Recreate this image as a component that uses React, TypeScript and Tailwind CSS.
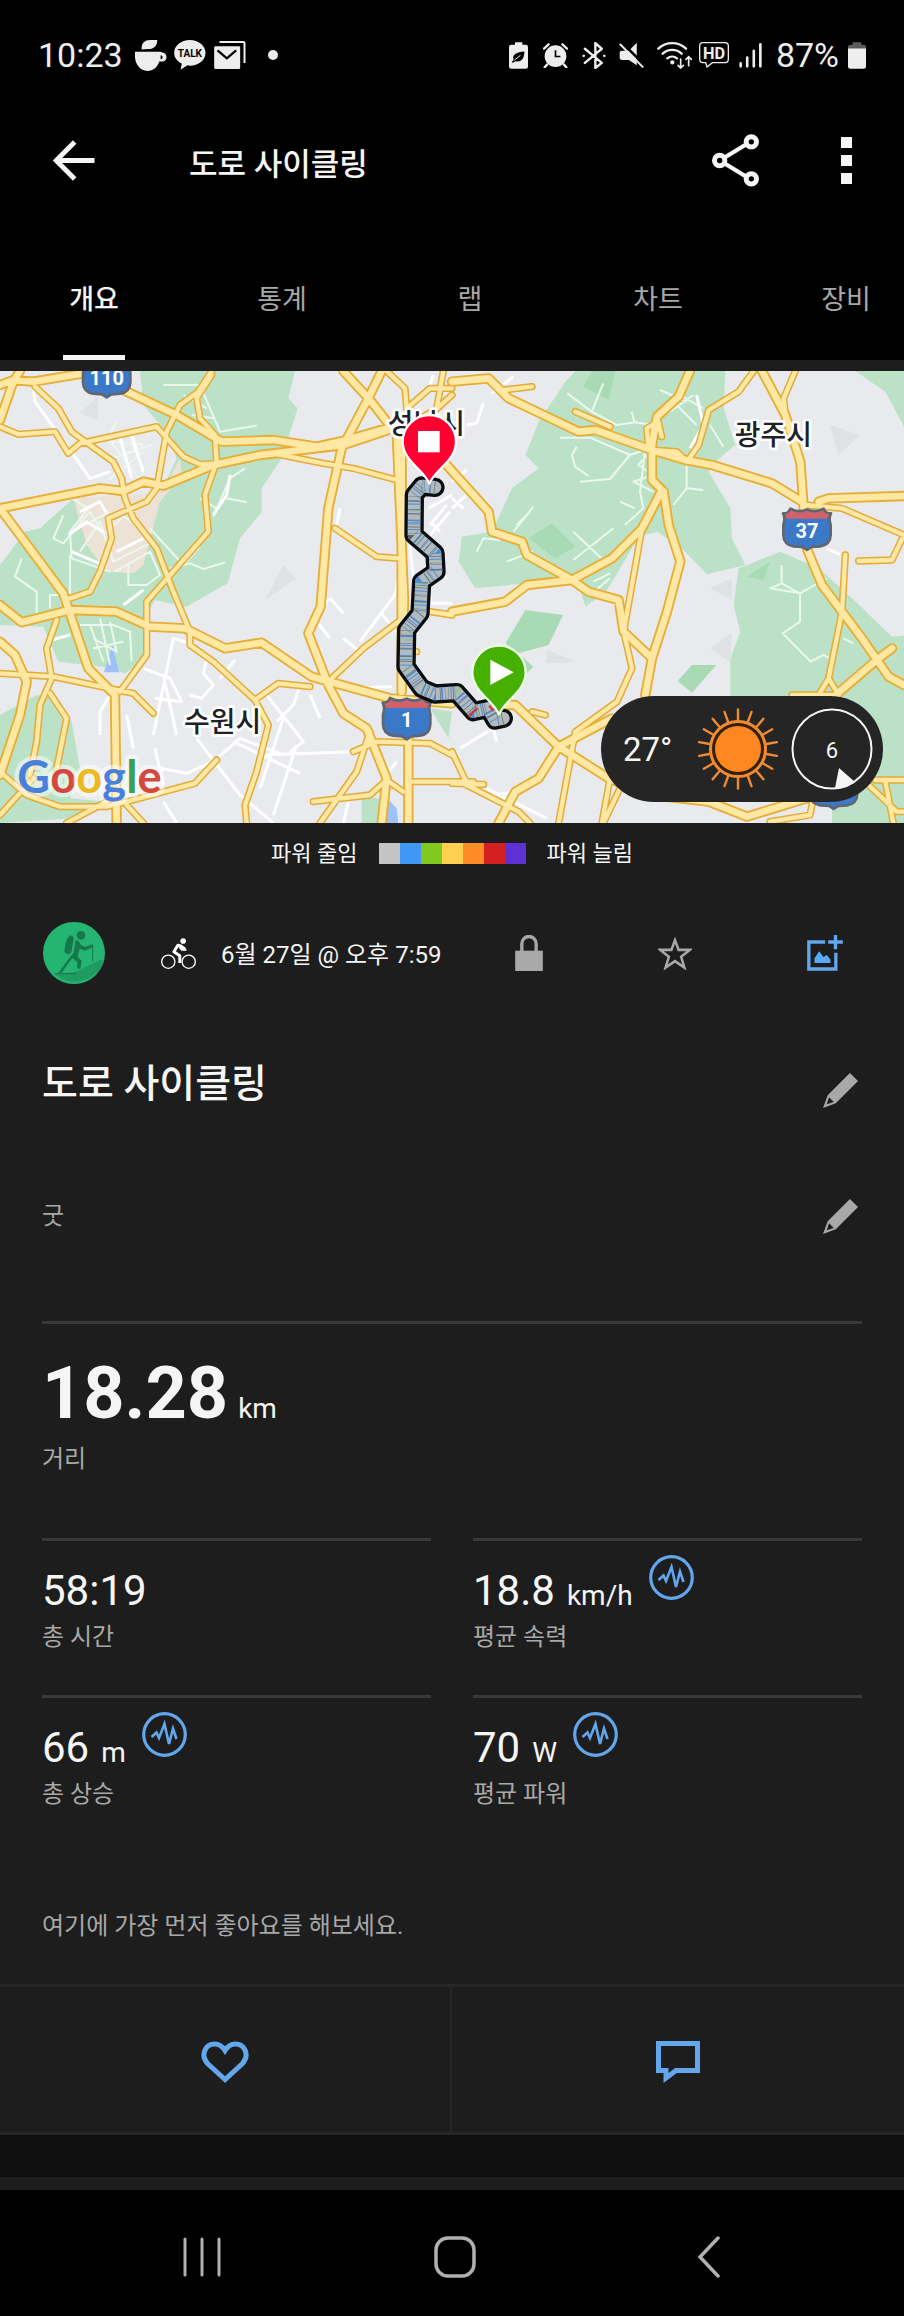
import React from 'react';

const TABS = ['개요', '통계', '랩', '차트', '장비'];

const POWER_COLORS = ['bg-[#c4c4c4]', 'bg-[#3f98f4]', 'bg-[#82c91e]', 'bg-[#ffd04f]', 'bg-[#ff8c26]', 'bg-[#d42020]', 'bg-[#5f30d6]'];

const STATS = [
  { label: '총 시간', value: '58:19', unit: '', chart: false },
  { label: '평균 속력', value: '18.8', unit: 'km/h', chart: true },
  { label: '총 상승', value: '66', unit: 'm', chart: true },
  { label: '평균 파워', value: '70', unit: 'W', chart: true },
];

// Map geometry, in a 2712 x 1374 coordinate space
const PARKS = [
  'M420 18H885L865 100L893 130L845 280L785 370V440L720 520L683 655L560 725L465 705L435 760L445 880L375 925L310 905L175 890L130 785L0 780V600L75 500L120 490L220 400L480 390L530 280L490 190L430 120Z',
  'M0 1050L110 990L170 1000L215 1070L240 1210L210 1300L320 1310L220 1360L0 1374Z',
  'M1290 1030L1356 1040L1345 1120Z',
  'M1085 1300H1160L1150 1374H1085Z',
  'M1726 18H2176L2171 130L2206 240L2146 290L2126 320L2191 430L2196 520L2236 600L2121 628L2041 545L1971 500L1916 515L1866 600L1821 675L1756 725L1731 640L1426 670L1376 590L1386 515L1476 500L1536 370L1616 310L1576 270L1616 170L1696 50Z',
  'M2241 600L2341 560L2456 610L2546 690L2676 815L2712 812V1374H2496V1290L2191 990V880L2221 800L2201 720L2216 610Z',
  'M2566 18H2712V185L2656 80Z',
];

const DARK_PARKS = [
  'M1576 735L1689 750L1646 840L1556 865L1516 835Z',
  'M2076 900H2149L2076 983L2033 948Z',
  'M1656 475L1726 545L1666 580L1586 520Z',
  'M1776 18H1846L1826 105L1750 65Z',
  'M2310 590L2290 645L2240 635Z',
  'M1560 870L1600 905L1580 925Z',
];

const HILLS = [
  'M293 95V165L238 145Z',
  'M850 600L888 640L795 705Z',
  'M2490 180L2580 210L2515 270Z',
  'M2130 670L2195 640V705Z',
  'M2130 850L2195 805L2190 890Z',
  'M1640 855L1735 890L1640 895Z',
];

const STREETS =
  'M350 165L325 220L430 360M395 195L430 330M325 285L455 240M335 230L430 240M325 345L430 260M215 400L265 430L210 500L215 580L330 620M190 450L160 520L190 535L270 440L310 510L370 455L450 500M215 500L330 440M240 560L300 470L340 590L460 530M345 620L450 560L480 630L440 660H385V600M210 570V690L150 690V730M65 580L45 635L110 680V760M490 60H600L660 200L770 182M575 150L640 160M550 90L620 130M640 455L690 340L735 310M680 400L740 412M650 430L600 400M510 610L570 595L610 612L675 592M450 490L550 600L600 545M240 780H340L390 800L395 890M270 780L310 890M330 770L350 860L280 820M300 760L330 900M280 850L370 830';

const R_STREETS =
  'M1702 85L1775 140L1810 55M1775 140L1850 180L1905 172L1990 185M1730 245L1716 270L1725 305L1765 333M1740 350L1830 342L1890 270L1770 218H1680M1905 175L1895 140M1890 270L1935 255L1920 380L1930 430L1875 480M1950 260L1915 300L1960 330L1900 350L1960 380M2060 290V370L2110 375M2060 370L2020 420M1980 75L2060 110M2030 120L2090 180M2040 90L2110 130M2010 140L2080 90M2130 180L2170 245M1540 500L1590 440M1550 480L1580 450L1600 425M1720 500L1815 590M1720 585L1840 490M1430 560L1450 520L1500 525M1520 590L1600 560M2345 600V655L2400 685L2480 640M2345 655L2310 670L2400 685V770L2348 805L2432 890L2470 870L2490 880M2530 820L2560 835M1770 690L1830 640M1780 650L1830 625M1860 410L1905 430';

const WHITE_ROADS =
  'M100 70L105 110L200 240L270 340L330 320M355 200L395 340M390 200L430 320M240 440L300 410L340 480M205 510L260 470L310 500M350 560L430 520M215 560L320 605M370 720L430 675M690 330L680 390L640 450M460 1110L520 820L570 835M430 910L510 940L545 1010L465 1000M490 930L530 1110M620 880L610 925L640 960L605 1000L570 990M660 940L705 885M800 990L910 1130L870 1160M905 950L880 1020L830 1070M780 1170L1060 1160M850 1060L780 1270M890 1140L820 1350M700 1130L900 1225M590 1120L720 1290L820 1374M380 1050L400 1150M300 1110V1040L330 990M640 1190L720 1120L850 1170M985 700L950 770L990 820M990 700L1030 745M1030 820L1080 860M1195 640L1185 690L1080 830M1140 740L1190 800M1040 970L1175 965M930 990L960 1060M1045 1310L1030 1374M1190 1190L1150 1240M490 1310L530 1374M480 1210L560 1225L640 1190M465 1150L490 1260M155 825L210 810M1020 430L1010 480M1285 430L1356 390M1290 480L1340 420M1290 510L1350 440M1290 470L1320 500M1270 610L1340 640M1290 690V715H1356M1230 540L1240 640M1300 30L1280 90M1356 350L1400 315M1356 430L1410 380M1356 400L1390 430M1475 85L1540 35M1400 180L1430 175L1450 115M1380 1150L1480 1090L1490 1130M1460 1270L1640 1360M1480 1290L1550 1280M2070 250L2110 180L2090 90M2480 550L2520 568';

const MAIN_ROADS = [
  'M0 430L300 370L370 378L430 350L490 362L640 300L780 270L1030 240L1180 190',
  'M0 430L190 685L265 910L345 990L350 1374',
  'M370 75L530 150L665 230L820 225L950 245L1040 225L1160 190',
  'M0 720L65 772L210 735L350 740L450 785L555 790L675 850L785 833L935 935L1170 1000L1356 1015',
  'M1190 200L1212 700L1205 980M1205 200V980M1225 1120V1374',
  'M1145 18L1105 100L1025 250L985 430L962 725L925 805L985 960L1030 1045L1100 1090L1160 1240L1145 1374',
  'M1030 18L1110 105L1200 220',
  'M0 60L40 45L100 50L280 20M60 18L40 50L0 165',
  'M0 830L45 870L80 950L60 1050L0 1230',
  'M1356 50L1466 40L1526 100L1736 200L1786 195L1956 255L2056 285L2136 300L2316 355L2406 410',
  'M2286 18L2356 150L2401 290L2411 430L2416 540L2466 660L2586 820L2666 935L2712 960',
  'M2456 410L2486 400L2712 393',
  'M2070 18L2036 95L1971 155L1956 240V345L1986 375L1926 490L1836 580L1716 645L1581 660L1516 710L1356 740',
  'M1991 380L2006 480L2041 590L2001 740L1956 880L1936 990',
  'M1340 300L1466 440L1476 500L1566 530L1581 570L1716 645L1766 680L1856 705L1871 800L1956 880',
  'M1506 1020H1546L1676 1145L1826 1240L1956 1290L2126 1310L2241 1355L2420 1300',
  'M1836 1060L1676 1145L1616 1240L1546 1280L1496 1374',
  'M2676 850L2636 880L2496 1000',
];

const SIDE_ROADS = [
  'M105 65L175 130L215 200L340 290L365 340L375 400L400 460L470 550L520 680L570 800V840L640 890L765 1005L805 1080L770 1220L735 1320L740 1374',
  'M0 185L55 208L165 200L205 265L240 235L470 185L550 275L600 298L650 295',
  'M635 18L595 80L540 120L500 200L470 370L440 410L325 460L335 520L300 620L270 680L210 700',
  'M635 30L590 100L600 160L645 210L650 290L615 390L625 500L440 710V870L360 980',
  'M170 765L140 850L155 940L120 1020L110 1130L90 1230',
  'M0 925L160 935L400 985L460 1045M150 985L200 1060L170 1210',
  'M765 1005L835 955L930 965M1005 490L1130 575L1195 580',
  'M820 265L970 295L1060 310L1190 345M1195 770L1090 850L990 945',
  'M650 1185L585 1255L380 1310L320 1325L180 1325L80 1290L0 1220M320 1310L200 1374M380 1320L430 1374M100 1240L0 1350',
  'M1110 1100L1070 1220L960 1374M940 1310L1110 1290L1160 1245L1210 1280M1060 1160L1130 1130L1290 1135L1356 1170M1240 1250H1420',
  'M1160 18L1215 70L1220 130L1290 70H1356M1330 18L1310 130L1200 200M1356 90L1290 150',
  'M1290 740L1356 750M1250 860H1246',
  'M1926 490L1871 800L1896 910L1851 1010L1726 1100L1676 1374',
  'M1726 140L1831 185M2261 18L2216 80L2126 135L2096 240L2061 290M2386 18L2351 100L2356 150',
  'M2416 420L2526 430L2712 510L2676 585L2576 588M2536 570L2526 740L2486 940L2456 990M2486 940L2516 990',
  'M1511 75L1596 65M1596 1040L1636 1050M1356 1160L1396 1245M1356 1255L1451 1258M1380 1250L1556 1340L1590 1374',
  'M1830 1240L1806 1374M1860 1270L1810 1374M2606 1260L2690 1340L2712 1340M2626 1245H2712M2656 1250L2680 1374M2310 1370L2430 1350L2440 1300',
  'M2376 990H2496M1946 250L1940 190L1975 170L1985 215M1956 255L2030 260L2061 290',
];

const ROUTE =
  'M1305 367L1265 363L1243 390L1242 510L1305 565L1308 620L1265 650L1260 745L1220 795L1218 905L1265 970L1305 987L1370 983L1420 1040L1465 1030L1485 1065L1510 1060';

const SHIELD =
  'M-72 -50Q-57 -48 -50 -64Q-25 -50 0 -62Q25 -50 50 -64Q57 -48 72 -50Q64 -36 71 -15V15Q70 44 40 49L14 51L0 60L-14 51L-40 49Q-70 44 -71 15V-15Q-64 -36 -72 -50Z';

const PIN = 'M0 128C-10 88 -80 60 -80 0A80 80 0 1 1 80 0C80 60 10 88 0 128Z';

const Shield: React.FC<{ x: number; y: number; text: string }> = ({ x, y, text }) => (
  <g transform={`translate(${x} ${y})`}>
    <path d={SHIELD} fill="#3b78c8" stroke="#5f6670" strokeWidth="8" strokeLinejoin="round" />
    <path d="M-67 -47Q-55 -47 -48 -59Q-25 -46 0 -58Q25 -46 48 -59Q55 -47 67 -47L60 -34H-60Z" fill="#d2626a" />
    {text && <text y="24" textAnchor="middle" fontSize="60" fontWeight="700" fill="#fff">{text}</text>}
  </g>
);

const CityLabel: React.FC<{ x: number; y: number; text: string }> = ({ x, y, text }) => (
  <text x={x} y={y} fontSize="84" fontWeight="500" fill="#202124" stroke="#fff" strokeWidth="16" strokeLinejoin="round" paintOrder="stroke" textAnchor="middle">
    {text}
  </text>
);

const RouteMap: React.FC = () => (
  <svg viewBox="0 18 2712 1356" className="block w-full" role="img" aria-label="Route map">
    <rect y="18" width="2712" height="1356" fill="#e8eaed" />
    <path d={PARKS.join('')} fill="#bbe2c6" />
    <path d="M220 400L485 385L540 280L545 330L480 410L430 600L400 625L320 620L260 540Z" fill="#ece2d6" />
    <path d={DARK_PARKS.join('')} fill="#a8dab5" />
    <path d={HILLS.join('')} fill="#dfe1e2" />
    <path d="M338 840L357 922H312Z M1160 1300L1190 1330L1195 1374H1150Z" fill="#9fc0fa" />
    <g fill="none" strokeLinejoin="round">
      <path d={STREETS + R_STREETS} stroke="#eaf8ee" strokeWidth="6" />
      <path d={WHITE_ROADS} stroke="#fff" strokeWidth="9" />
      <g strokeLinecap="round">
        <path d={SIDE_ROADS.join('')} stroke="#e3ab38" strokeWidth="22" />
        <path d={MAIN_ROADS.join('')} stroke="#e6ae35" strokeWidth="31" />
        <path d={SIDE_ROADS.join('')} stroke="#ffe8a3" strokeWidth="13" />
        <path d={MAIN_ROADS.join('')} stroke="#ffe8a3" strokeWidth="20" />
      </g>
    </g>

    <Shield x={320} y={37} text="110" />
    <Shield x={1220} y={1063} text="1" />
    <Shield x={2421} y={495} text="37" />
    <Shield x={2501} y={1272} text="" />

    <CityLabel x={1279} y={208} text="성남시" />
    <CityLabel x={668} y={1102} text="수원시" />
    <CityLabel x={2320} y={240} text="광주시" />

    <g fill="none" strokeLinejoin="round">
      <path d={ROUTE} stroke="#0a0d10" strokeWidth="58" strokeLinecap="round" />
      <path d={ROUTE} stroke="#b4b9bd" strokeWidth="38" strokeLinecap="round" />
      <path d={ROUTE} stroke="#4f90d8" strokeWidth="38" strokeDasharray="3 9 2 17 5 6 3 14" />
      <path d={ROUTE} stroke="#a6c08a" strokeWidth="38" strokeDasharray="2 31 3 54" />
      <path d={ROUTE} stroke="#5d656c" strokeWidth="38" strokeDasharray="1 13 2 23" />
      <path d="M1405 1055L1432 1030M1468 1022L1480 1038" stroke="#d2382f" strokeWidth="7" />
    </g>

    <g transform="translate(1288 230)">
      <path d={PIN} fill="#ff0030" stroke="#fff" strokeWidth="7" />
      <rect x="-34" y="-32" width="65" height="64" fill="#fff" />
    </g>
    <g transform="translate(1497 922)">
      <path d={PIN} fill="#46b000" stroke="#eaffe4" strokeWidth="7" />
      <path d="M-26 -38L44 0L-26 38Z" fill="#fff" />
    </g>

    <text x="52" y="1283" fontSize="136" fontWeight="700" fontFamily="Lato, sans-serif" stroke="#fff" strokeOpacity="0.5" strokeWidth="26" strokeLinejoin="round" paintOrder="stroke">
      <tspan fill="#4a80dc">G</tspan>
      <tspan fill="#d5483d">o</tspan>
      <tspan fill="#ecb920">o</tspan>
      <tspan fill="#4a80dc">g</tspan>
      <tspan fill="#3c9e57">l</tspan>
      <tspan fill="#d5483d">e</tspan>
    </text>
  </svg>
);

const WeatherBadge: React.FC = () => (
  <div className="absolute right-[21px] bottom-[21px] flex h-[106px] items-center rounded-full bg-[#252525] pr-[10px] pl-[22px] text-[#f5f5f5]">
    <span className="w-[74px] pt-0.5 text-[33px] leading-10">27°</span>
    <svg viewBox="-41 -41 82 82" className="size-[82px]">
      <g stroke="#f28b30" strokeWidth="2.4" strokeLinecap="round">
        {Array.from({ length: 18 }, (_, i) => (
          <line key={i} x1="0" y1="-29" x2="0" y2="-39.5" transform={`rotate(${i * 20})`} />
        ))}
      </g>
      <circle r="27.5" fill="#33200f" stroke="#f28b30" strokeWidth="3" />
      <circle r="23" fill="#ff871f" />
    </svg>
    <svg viewBox="-41 -41 82 82" className="ml-[12px] size-[82px]">
      <circle r="39.5" fill="none" stroke="#f5f5f5" strokeWidth="2" />
      <path d="M7 19L23 33A40 40 0 0 1 3 39Z" fill="#f5f5f5" />
      <text y="9" textAnchor="middle" fontSize="22" fill="#f5f5f5">6</text>
    </svg>
  </div>
);

const StatusBar: React.FC = () => (
  <div className="flex h-28 items-center justify-between bg-black px-[38px] pb-0.5 text-[#ededed]">
    <div className="flex items-center">
      <span className="w-[97px] text-[34px] leading-10">10:23</span>
      <svg viewBox="0 0 95 92" className="h-[31px] w-8" fill="currentColor">
        <path d="M20 28C18 10 28 0 45 0H66C66 18 56 27 40 27Z" />
        <path d="M0 35H76Q78 37 82 37A14 14 0 0 1 84 64H72C66 82 54 92 37 92C16 92 0 72 0 50ZM76 45V57A6 6 0 0 0 76 45Z" fillRule="evenodd" />
      </svg>
      <svg viewBox="0 0 95 90" className="ml-[7px] h-[30px] w-8" fill="currentColor">
        <path d="M47 0C73 0 94 17 94 39S73 77 47 77L40 76L19 89L23 71C9 64 0 52 0 39C0 17 21 0 47 0Z" />
        <text x="47" y="50" textAnchor="middle" fontSize="30" fontWeight="700" fill="#000">TALK</text>
      </svg>
      <svg viewBox="0 0 95 84" className="ml-2 h-7 w-8" fill="none" stroke="currentColor">
        <path d="M0 20Q0 16 4 16H74Q78 16 78 20V80Q78 84 74 84H4Q0 84 0 80Z" fill="currentColor" stroke="none" />
        <path d="M16 3H88Q91 3 91 6V66" strokeWidth="6" />
        <path d="M10 28L38 52L66 28" stroke="#000" strokeWidth="7" />
      </svg>
      <span className="ml-[22px] size-[10px] rounded-full bg-[#ededed]" />
    </div>

    <div className="flex items-center">
      <svg viewBox="0 0 57 80" className="h-[27px] w-[19px]" fill="currentColor">
        <path d="M18 0H40V8H50Q57 8 57 15V73Q57 80 50 80H7Q0 80 0 73V15Q0 8 7 8H18Z" />
        <path d="M8 60L14 53C8 37 24 29 46 28C46 48 38 62 18 57L12 62Z" fill="#000" />
        <path d="M16 54L34 40" stroke="#ededed" strokeWidth="3" />
      </svg>
      <svg viewBox="0 0 76 76" className="ml-[15px] size-[25px]" fill="currentColor">
        <circle cx="38" cy="40" r="33" />
        <path d="M3 17L17 4M73 17L59 4M13 65L5 74M63 65L71 74" stroke="currentColor" strokeWidth="7" strokeLinecap="round" />
        <path d="M38 22V41H53" stroke="#000" strokeWidth="5" fill="none" />
      </svg>
      <svg viewBox="0 0 70 80" className="ml-[14px] h-[27px] w-6" fill="none" stroke="currentColor" strokeWidth="7" strokeLinecap="round" strokeLinejoin="round">
        <path d="M8 20L58 62L39 77V3L58 20L8 62M4 41H5M65 41H66" />
      </svg>
      <svg viewBox="0 0 76 78" className="ml-[13px] h-[26px] w-[25px]" fill="currentColor">
        <path d="M54 2V70L30 54H10Q2 54 2 46V33Q2 26 10 26H30Z" />
        <path d="M11 3L77 69" stroke="#000" strokeWidth="8" />
        <path d="M4 7L72 75" stroke="currentColor" strokeWidth="6" strokeLinecap="round" />
      </svg>
      <svg viewBox="0 0 108 84" className="ml-[13px] h-7 w-9" fill="none" stroke="currentColor" strokeWidth="7" strokeLinecap="round">
        <path d="M4 23A60 60 0 0 1 87 23M17 38A42 42 0 0 1 74 38M31 52A23 23 0 0 1 60 52" />
        <circle cx="46" cy="64" r="3" fill="currentColor" />
        <path d="M71 54V80M63 73L71 81L79 73M95 74V48M87 55L95 47L103 55" strokeWidth="5" />
      </svg>
      <svg viewBox="0 0 90 78" className="ml-1.5 h-[26px] w-[30px]">
        <path d="M12 2H78Q88 2 88 12V52Q88 62 78 62H40L24 75L20 62H12Q2 62 2 52V12Q2 2 12 2Z" fill="none" stroke="currentColor" strokeWidth="4" />
        <text x="45" y="50" textAnchor="middle" fontSize="49" fontWeight="700" fill="currentColor">HD</text>
      </svg>
      <svg viewBox="0 0 70 76" className="ml-2.5 h-[25px] w-[23px]" stroke="currentColor" strokeWidth="8" strokeLinecap="round">
        <path d="M5 62V71M25 44V71M45 24V71M65 4V71" />
      </svg>
      <span className="ml-[14px] text-[34px] leading-10">87%</span>
      <svg viewBox="0 0 54 80" className="ml-[9px] h-[27px] w-[18px]">
        <path d="M14 0H40V8H48Q54 8 54 14V22H0V14Q0 8 6 8H14Z" fill="#5c5c5c" />
        <path d="M0 19H54V73Q54 80 47 80H7Q0 80 0 73Z" fill="#ededed" />
      </svg>
    </div>
  </div>
);

const PencilIcon: React.FC = () => (
  <svg viewBox="0 0 104 104" className="size-[35px]" fill="#a8a8a8">
    <path d="M80 0L104 24L38 90L0 104L14 66ZM18 72L11 93L32 86Z" fillRule="evenodd" />
  </svg>
);

const ChartIcon: React.FC = () => (
  <svg viewBox="0 0 45 45" className="size-[45px]" fill="none" stroke="#62a6ec">
    <circle cx="22.5" cy="22.5" r="20.8" strokeWidth="3.2" />
    <path d="M9.5 25L14.5 20.5L17 26L22.5 12L27 32L31 16.5L34.5 27" strokeWidth="2.6" />
  </svg>
);

const Stat: React.FC<(typeof STATS)[number]> = ({ label, value, unit, chart }) => (
  <div className="flex flex-col-reverse border-t-[3px] border-[#393939] pt-3.5 pb-[42px]">
    <dt className="mt-2 text-2xl leading-8 text-[#a8a8a8]">{label}</dt>
    <dd className="flex h-[58px] items-start gap-4">
      <p className="mt-3 flex items-baseline gap-3 text-[42px] leading-[48px]">
        {value}
        {unit && <span className="text-[28px] leading-8">{unit}</span>}
      </p>
      {chart && (
        <button aria-label={`${label} 차트`}>
          <ChartIcon />
        </button>
      )}
    </dd>
  </div>
);

const App: React.FC = () => {
  return (
    <div className="bg-[#1d1d1d] text-[#f5f5f5] [font-family:Roboto,'Noto_Sans_CJK_KR',sans-serif]">
      <header className="bg-black">
        <StatusBar />
        <div className="flex h-[98px] items-center pr-[52px] pb-0.5 pl-[53px]">
          <button aria-label="뒤로">
            <svg viewBox="0 0 126 124" className="h-[41px] w-[42px]" fill="none" stroke="#f5f5f5" strokeWidth="15">
              <path d="M65 6L9 62L65 118M10 62H125" />
            </svg>
          </button>
          <h1 className="mt-2.5 ml-[94px] flex-1 text-[31px] leading-10 font-medium">도로 사이클링</h1>
          <button aria-label="공유">
            <svg viewBox="0 0 141 158" className="h-[53px] w-[47px]" fill="none" stroke="#f5f5f5" strokeWidth="15">
              <path d="M102 31L38 70M38 88L102 127" strokeWidth="13" />
              <circle cx="23" cy="79" r="15.5" />
              <circle cx="118" cy="23" r="15.5" />
              <circle cx="118" cy="134" r="15.5" />
            </svg>
          </button>
          <button aria-label="더보기" className="ml-[82px] flex flex-col gap-[7px]">
            <span className="size-[11px] bg-[#f5f5f5]" />
            <span className="size-[11px] bg-[#f5f5f5]" />
            <span className="size-[11px] bg-[#f5f5f5]" />
          </button>
        </div>
        <nav className="flex overflow-hidden">
          {TABS.map((tab, i) => (
            <button
              key={tab}
              className={`flex w-[188px] shrink-0 flex-col items-center pt-[70px] text-[27px] leading-10 ${i === 0 ? 'font-medium text-[#f5f5f5]' : 'text-[#a8a8a8]'}`}
            >
              {tab}
              <span className={`mt-[35px] h-[5px] w-[62px] ${i === 0 ? 'bg-[#f5f5f5]' : 'bg-transparent'}`} />
            </button>
          ))}
        </nav>
      </header>

      <main>
        <div className="relative mt-[11px]">
          <RouteMap />
          <WeatherBadge />
        </div>

        <div className="flex items-center justify-center gap-[21px] pt-3 text-[22px] leading-[34px]">
          <span className="pt-0.5">파워 줄임</span>
          <div className="flex">
            {POWER_COLORS.map((color) => (
              <span key={color} className={`size-[21px] ${color}`} />
            ))}
          </div>
          <span className="pt-0.5">파워 늘림</span>
        </div>

        <section className="px-[42px]">
          <div className="mt-[51px] flex items-center pl-px">
            <svg viewBox="0 0 186 186" className="size-[62px] shrink-0">
              <circle cx="93" cy="93" r="93" fill="#24b573" />
              <path d="M34 155C80 152 105 152 117 140L145 126L170 114L184 116A93 93 0 0 1 34 155Z" fill="#1f9a60" />
              <g fill="#16784a">
                <circle cx="114" cy="40" r="13" />
                <path d="M78 43C84 38 92 42 92 50L86 86C84 96 76 99 70 94L64 90C66 72 68 54 78 43Z" />
                <path d="M98 55C104 54 108 58 113 68L126 75L148 67L152 74L126 86L110 80L104 104L116 116L112 141L102 138L103 121L88 108L56 152L46 153L76 112L92 92Z" />
              </g>
              <path d="M149 69V118M34 155H100" stroke="#16784a" strokeWidth="3" />
            </svg>
            <svg viewBox="0 0 106 94" className="ml-14 h-[31px] w-[35px] shrink-0" fill="none" stroke="#fff">
              <circle cx="22" cy="72" r="20" strokeWidth="4" />
              <circle cx="84" cy="72" r="20" strokeWidth="4" />
              <circle cx="67" cy="9" r="8.5" fill="#fff" stroke="none" />
              <path d="M73 34L60 24L51 22L39 42L57 54V76" strokeWidth="9" strokeLinejoin="round" />
              <path d="M54 25L63 36H77" strokeWidth="6" />
            </svg>
            <p className="mt-1 ml-[25px] w-[235px] text-2xl leading-8 whitespace-nowrap">6월 27일 @ 오후 7:59</p>
            <div className="flex flex-1 items-center justify-between pr-[19px] pl-[59px]">
              <button aria-label="비공개">
                <svg viewBox="0 0 83 108" className="h-9 w-7" fill="#a8a8a8">
                  <path d="M0 47H83V108H0Z" />
                  <path d="M20 50V26A21 21 0 0 1 63 26V50" fill="none" stroke="#a8a8a8" strokeWidth="10" />
                </svg>
              </button>
              <button aria-label="즐겨찾기">
                <svg viewBox="4 4 94 90" className="h-[33px] w-[34px]" fill="none" stroke="#a8a8a8" strokeWidth="7">
                  <path d="M51 12L61 39L92 39L68 58L77 88L51 70L25 88L34 58L10 39L41 39Z" />
                </svg>
              </button>
              <button aria-label="사진 추가">
                <svg viewBox="0 0 107 108" className="h-9 w-9" fill="none" stroke="#62a6ec" strokeWidth="10">
                  <path d="M54 21H5V102H86V53M63 21H107M85 0V43" />
                  <path d="M22 84V70L36 49L49 66L59 60L70 74V84Z" fill="#5aa9f8" stroke="none" />
                </svg>
              </button>
            </div>
          </div>

          <div className="mt-[72px] flex items-end justify-between pr-1">
            <h2 className="text-[39px] leading-[56px] font-medium">도로 사이클링</h2>
            <button aria-label="제목 편집" className="mb-1">
              <PencilIcon />
            </button>
          </div>
          <div className="mt-[84px] flex h-10 items-center justify-between pr-1">
            <p className="text-2xl leading-8 text-[#a8a8a8]">굿</p>
            <button aria-label="메모 편집">
              <PencilIcon />
            </button>
          </div>

          <dl>
            <div className="mt-[85px] flex flex-col-reverse border-t-[3px] border-[#393939] pt-[34px] pb-[63px]">
              <dt className="mt-[13px] text-2xl leading-8 text-[#a8a8a8]">거리</dt>
              <dd className="flex items-baseline gap-2.5 text-[72px] leading-[72px] font-bold">
                18.28
                <span className="text-[28px] leading-8 font-normal">km</span>
              </dd>
            </div>
            <div className="grid grid-cols-2 gap-x-[42px]">
              {STATS.map((stat) => (
                <Stat key={stat.label} {...stat} />
              ))}
            </div>
          </dl>

          <p className="mt-[58px] mb-[42px] text-2xl leading-8 text-[#a8a8a8]">여기에 가장 먼저 좋아요를 해보세요.</p>
        </section>

        <div className="grid h-[151px] grid-cols-2 divide-x-2 divide-[#262626] border-y-[3px] border-[#262626]">
          <button aria-label="좋아요" className="flex items-center justify-center pt-1">
            <svg viewBox="0 0 48 42" className="h-[42px] w-12" fill="none" stroke="#62a6ec" strokeWidth="5">
              <path d="M24 38.5L6.5 22.5C-1 14 4.5 3 13.5 3C18 3 21.5 5.5 24 9.5C26.5 5.5 30 3 34.5 3C43.5 3 49 14 41.5 22.5Z" />
            </svg>
          </button>
          <button aria-label="댓글" className="flex items-center justify-center pt-1">
            <svg viewBox="0 0 44 42" className="h-[42px] w-11" fill="none" stroke="#62a6ec" strokeWidth="5">
              <path d="M2.5 2.5H41.5V29.5H20L10 37V29.5H2.5Z" />
            </svg>
          </button>
        </div>
        <div className="h-[42px] bg-[#0f0f0f]" />
      </main>

      <footer className="mt-[13px] grid h-[126px] grid-cols-3 bg-black pt-2 pr-[68px] pl-[75px]">
        <button aria-label="최근 앱" className="flex items-center justify-center">
          <svg viewBox="0 0 38 40" className="h-10 w-[38px]" stroke="#b0b0b0" strokeWidth="3" strokeLinecap="round">
            <path d="M2 2V38M19 2V38M36 2V38" />
          </svg>
        </button>
        <button aria-label="홈" className="flex items-center justify-center">
          <svg viewBox="0 0 42 42" className="size-[42px]" fill="none" stroke="#b0b0b0" strokeWidth="3.5">
            <rect x="2" y="2" width="38" height="38" rx="12" />
          </svg>
        </button>
        <button aria-label="이전" className="flex items-center justify-center">
          <svg viewBox="0 0 24 42" className="h-[42px] w-6" fill="none" stroke="#b0b0b0" strokeWidth="3.5" strokeLinecap="round">
            <path d="M21 2L3 21L21 40" />
          </svg>
        </button>
      </footer>
    </div>
  );
};

export default App;
